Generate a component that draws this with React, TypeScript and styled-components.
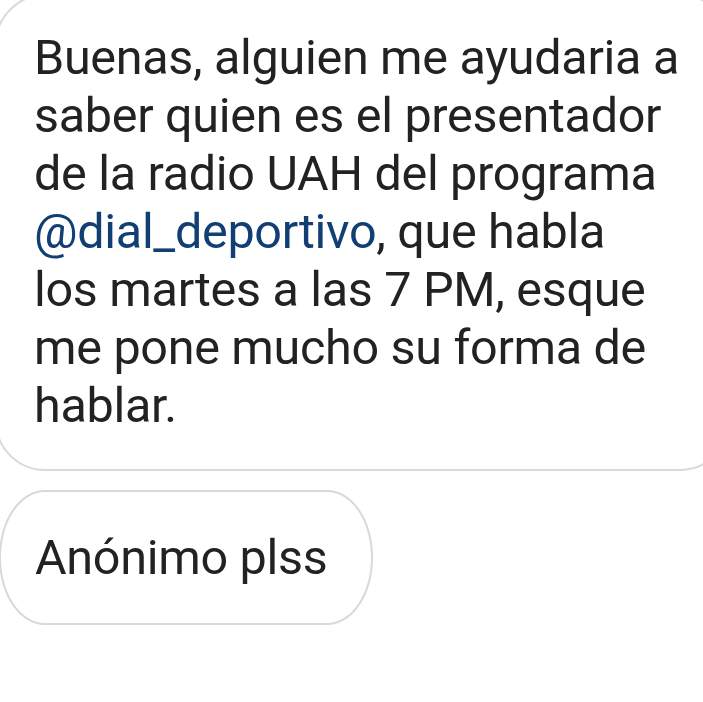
import styled, { createGlobalStyle } from "styled-components";

const Global = createGlobalStyle`
  html, body {
    margin: 0;
    padding: 0;
    background: #ffffff;
  }
  body {
    font-family: Roboto, "Liberation Sans", sans-serif;
    color: #222222;
  }
`;

export default function App() {
  return (
    <>
      <Global />
      <Page>
        <Bubble variant="message">
          <Text>
            Buenas, alguien me ayudaria a<br />
            saber quien es el presentador<br />
            de la radio UAH del programa<br />
            <Mention>@dial_deportivo</Mention>, que habla<br />
            los martes a las 7 PM, esque<br />
            me pone mucho su forma de<br />
            hablar.
          </Text>
        </Bubble>
        <Bubble variant="pill">
          <Text>Anónimo plss</Text>
        </Bubble>
      </Page>
    </>
  );
}

const Page = styled.div`
  width: 703px;
  height: 702px;
  overflow: hidden;
  display: flex;
  flex-direction: column;
  align-items: flex-start;
  gap: 19px;
`;

const Bubble = styled.div<{ variant: "message" | "pill" }>`
  box-sizing: border-box;
  border: 2px solid #d9d9d9;
  background: #ffffff;
  white-space: nowrap;
  ${(p) =>
    p.variant === "message"
      ? `
    width: 735px;
    margin: -6px 0 0 -5px;
    padding: 33px 20px 34px 37px;
    border-radius: 50px;
  `
      : `
    width: 374px;
    height: 135px;
    margin-left: -1px;
    padding: 0 0 0 34px;
    border-radius: 46px / 67px;
    display: flex;
    align-items: center;
  `}
`;

const Text = styled.p`
  margin: 0;
  font-size: 48.5px;
  line-height: 58px;
  letter-spacing: -0.3px;
`;

const Mention = styled.span`
  color: #113f73;
`;
